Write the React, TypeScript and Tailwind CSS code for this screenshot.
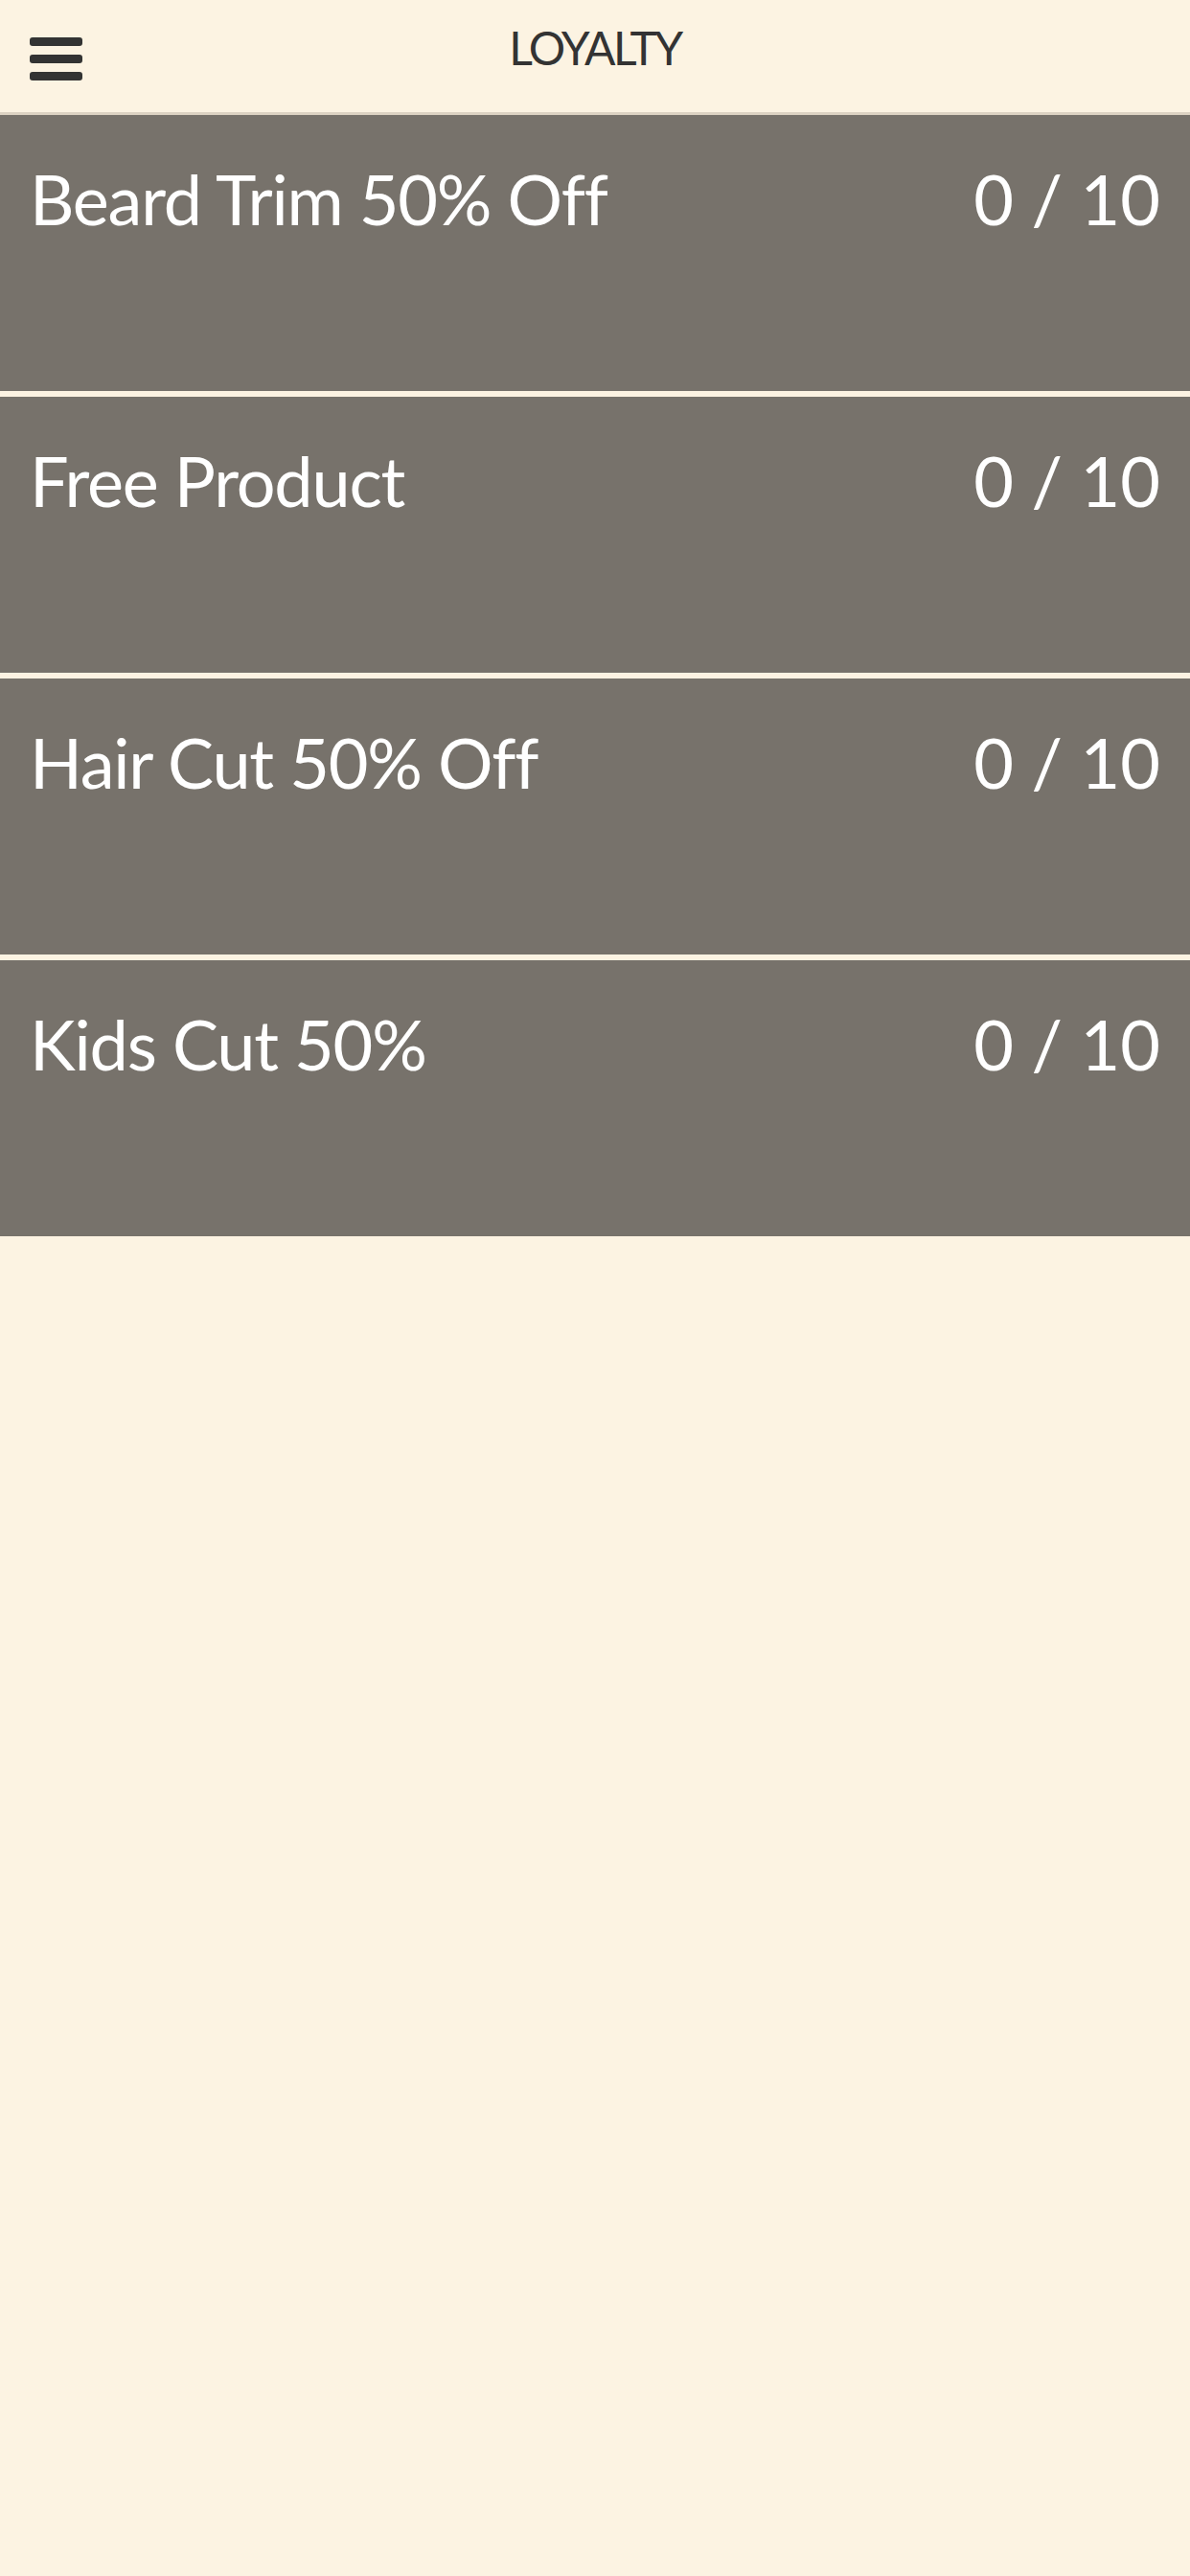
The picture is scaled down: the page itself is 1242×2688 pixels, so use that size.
import React from "react";

type Reward = {
  id: number;
  title: string;
  stamps: number;
  goal: number;
};

const rewards: Reward[] = [
  { id: 1, title: "Beard Trim 50% Off", stamps: 0, goal: 10 },
  { id: 2, title: "Free Product", stamps: 0, goal: 10 },
  { id: 3, title: "Hair Cut 50% Off", stamps: 0, goal: 10 },
  { id: 4, title: "Kids Cut 50%", stamps: 0, goal: 10 },
];

function MenuButton() {
  return (
    <button className="flex flex-col gap-[9px] cursor-pointer" aria-label="Menu">
      <span className="block h-[9px] w-[55px] rounded-[3px] bg-[#333333]" />
      <span className="block h-[9px] w-[55px] rounded-[3px] bg-[#333333]" />
      <span className="block h-[9px] w-[55px] rounded-[3px] bg-[#333333]" />
    </button>
  );
}

function RewardCard({ reward }: { reward: Reward }) {
  return (
    <li className="h-[288px] bg-[#77726b] px-[31px] pt-[44px] flex justify-between items-start text-white">
      <span className="text-[72px] leading-[1.2] tracking-[-1.2px]">{reward.title}</span>
      <span className="text-[72px] leading-[1.2]">
        {reward.stamps} / {reward.goal}
      </span>
    </li>
  );
}

export default function App() {
  return (
    <div
      className="min-h-screen w-full bg-[#fcf3e2]"
      style={{ fontFamily: "Lato, 'Open Sans', sans-serif" }}
    >
      <header className="h-[120px] grid grid-cols-[1fr_auto_1fr] items-start px-[31px] border-b-[3px] border-b-[#ddd3c3]">
        <div className="pt-[39px]">
          <MenuButton />
        </div>
        <h1 className="pt-[21px] text-[48px] leading-[1.2] text-[#333333] tracking-[-2.5px]">
          LOYALTY
        </h1>
        <div />
      </header>

      <ul className="flex flex-col gap-[6px]">
        {rewards.map((r) => (
          <RewardCard key={r.id} reward={r} />
        ))}
      </ul>
    </div>
  );
}
